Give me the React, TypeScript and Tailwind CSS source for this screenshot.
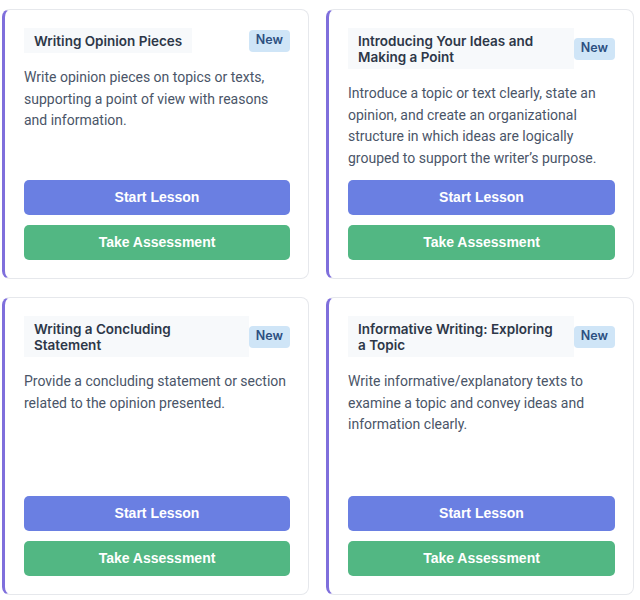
import React from 'react';

type Lesson = {
  title: string;
  description: string;
};

const lessons: Lesson[] = [
  {
    title: 'Writing Opinion Pieces',
    description: 'Write opinion pieces on topics or texts, supporting a point of view with reasons and information.',
  },
  {
    title: 'Introducing Your Ideas and Making a Point',
    description:
      'Introduce a topic or text clearly, state an opinion, and create an organizational structure in which ideas are logically grouped to support the writer\u2019s purpose.',
  },
  {
    title: 'Writing a Concluding Statement',
    description: 'Provide a concluding statement or section related to the opinion presented.',
  },
  {
    title: 'Informative Writing: Exploring a Topic',
    description: 'Write informative/explanatory texts to examine a topic and convey ideas and information clearly.',
  },
];

const LessonCard = ({ lesson, tall }: { lesson: Lesson; tall: boolean }) => (
  <div
    className={`flex flex-col bg-white rounded-lg border border-[#e6e8ec] border-l-[3px] border-l-[#7f6fdc] pt-[18px] pb-[18px] pl-[19px] pr-[18px] ${
      tall ? 'h-[298px]' : 'h-[270px]'
    }`}
  >
    {/* Header */}
    <div className="flex items-center justify-between mb-[14px]">
      <h3 className="bg-[#f7f9fb] px-[10px] pt-[5px] pb-[4px] font-['Inter',sans-serif] text-[13.5px] leading-[16px] font-semibold text-[#2d3748]">
        {lesson.title}
      </h3>
      <span className="shrink-0 h-[22px] px-[7px] flex items-center rounded-[4px] bg-[#cfe5f7] font-['Inter',sans-serif] text-[12.5px] font-semibold text-[#2c4f80]">
        New
      </span>
    </div>

    <p className="text-[14px] leading-[21.7px] text-[#4a5568]">{lesson.description}</p>

    {/* Actions */}
    <div className="mt-auto flex flex-col gap-[10px] font-['Liberation_Sans',Arial,sans-serif]">
      <button className="h-[35px] w-full rounded-[5px] bg-[#6a7fe2] text-white text-[14px] font-bold">
        Start Lesson
      </button>
      <button className="h-[35px] w-full rounded-[5px] bg-[#52b783] text-white text-[14px] font-bold">
        Take Assessment
      </button>
    </div>
  </div>
);

export default function App() {
  return (
    <div className="min-h-screen bg-white pl-[2px] pt-[9px] font-['Roboto',sans-serif]">
      <div className="grid grid-cols-[307px_308px] gap-x-[17px] gap-y-[18px]">
        {lessons.map((lesson, i) => (
          <LessonCard key={lesson.title} lesson={lesson} tall={i >= 2} />
        ))}
      </div>
    </div>
  );
}
